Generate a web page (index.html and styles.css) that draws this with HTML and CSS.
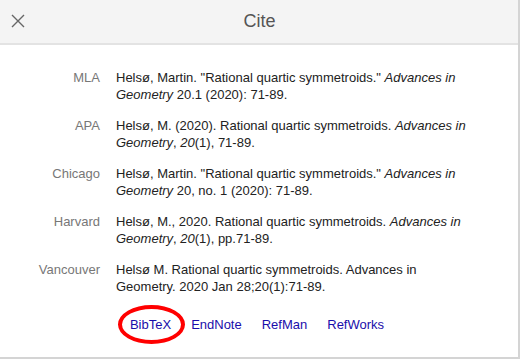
FILE: index.html
```html
<!DOCTYPE html>
<html lang="en">
<head>
    <meta charset="UTF-8">
    <meta name="viewport" content="width=device-width, initial-scale=1.0">
    <title>Cite</title>
    <link rel="stylesheet" href="styles.css">
</head>
<body>

<div class="cite-dialog">
    <div class="cite-header">
        <button class="close-btn" aria-label="Close">
            <svg width="14" height="14" viewBox="0 0 14 14">
                <path d="M1 1 L13 13 M13 1 L1 13" stroke="#666" stroke-width="1.4" fill="none"/>
            </svg>
        </button>
        <h2>Cite</h2>
    </div>

    <div class="cite-body">
        <div class="cite-list">
            <div class="cite-label">MLA</div>
            <div class="cite-text">Helsø, Martin. "Rational quartic symmetroids." <i>Advances in Geometry</i> 20.1 (2020): 71-89.</div>

            <div class="cite-label">APA</div>
            <div class="cite-text">Helsø, M. (2020). Rational quartic symmetroids. <i>Advances in Geometry</i>, <i>20</i>(1), 71-89.</div>

            <div class="cite-label">Chicago</div>
            <div class="cite-text">Helsø, Martin. "Rational quartic symmetroids." <i>Advances in Geometry</i> 20, no. 1 (2020): 71-89.</div>

            <div class="cite-label">Harvard</div>
            <div class="cite-text">Helsø, M., 2020. Rational quartic symmetroids. <i>Advances in Geometry</i>, <i>20</i>(1), pp.71-89.</div>

            <div class="cite-label">Vancouver</div>
            <div class="cite-text">Helsø M. Rational quartic symmetroids. Advances in Geometry. 2020 Jan 28;20(1):71-89.</div>
        </div>

        <div class="cite-links">
            <a href="#" class="marked">BibTeX</a>
            <a href="#">EndNote</a>
            <a href="#">RefMan</a>
            <a href="#">RefWorks</a>
        </div>
    </div>
</div>

</body>
</html>
```

FILE: styles.css
```css
body {
    font-family: "Liberation Sans", Arial, sans-serif;
    background-color: white;
    margin: 0;
}
.cite-dialog {
    width: 518px;
    height: 357px;
    border-right: 2px solid #d4d4d4;
    border-bottom: 2px solid #d4d4d4;
    background-color: white;
}
.cite-header {
    height: 43px;
    background-color: #f4f4f4;
    border-bottom: 2px solid #e3e3e3;
    display: flex;
    align-items: center;
    justify-content: center;
    position: relative;
}
.cite-header h2 {
    margin: 0;
    font-size: 18px;
    font-weight: normal;
    color: #555;
    padding-left: 1px;
}
.close-btn {
    position: absolute;
    left: 11px;
    top: 14px;
    border: none;
    background: none;
    padding: 0;
    width: 14px;
    height: 14px;
    cursor: pointer;
}
.close-btn svg {
    display: block;
}
.cite-body {
    padding: 24px 0 0 0;
}
.cite-list {
    display: grid;
    grid-template-columns: 100px 360px;
    column-gap: 16px;
    row-gap: 14px;
    font-size: 13px;
    line-height: 17px;
}
.cite-label {
    text-align: right;
    color: #777;
}
.cite-text {
    color: #222;
}
.cite-links {
    display: flex;
    justify-content: center;
    gap: 20px;
    margin-top: 22px;
    font-size: 13px;
    padding-right: 4px;
}
.cite-links a {
    color: #1a0dab;
    text-decoration: none;
}
.cite-links a.marked {
    position: relative;
}
.cite-links a.marked::after {
    content: "";
    position: absolute;
    left: -12px;
    top: -12px;
    width: 59px;
    height: 31px;
    border: 4px solid #f00;
    border-radius: 50%;
}
```
